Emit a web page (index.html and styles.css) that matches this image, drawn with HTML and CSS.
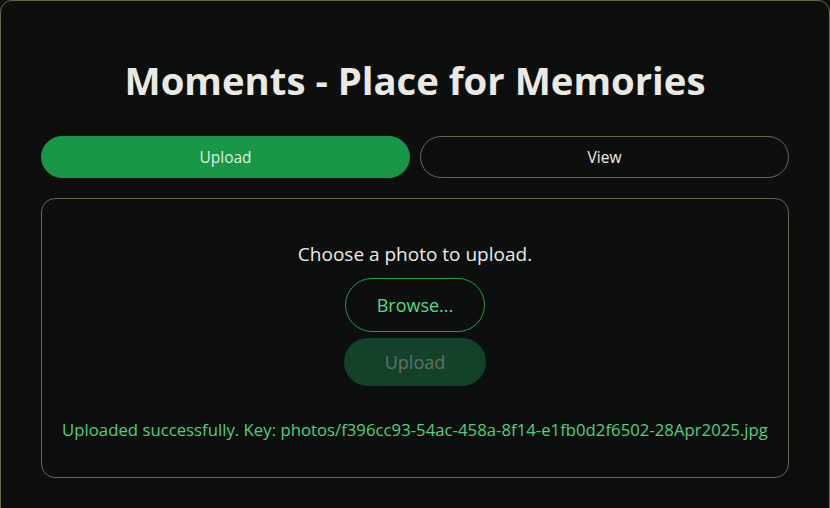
FILE: index.html
```html
<!DOCTYPE html>
<html lang="en">
<head>
<meta charset="utf-8">
<title>Moments</title>
<link rel="stylesheet" href="styles.css">
</head>
<body>
<main class="card">
  <h1 class="title">Moments - Place for Memories</h1>
  <nav class="tabs">
    <button class="tab tab-active">Upload</button>
    <button class="tab">View</button>
  </nav>
  <section class="panel">
    <p class="prompt">Choose a photo to upload.</p>
    <button class="btn btn-browse">Browse...</button>
    <button class="btn btn-upload" disabled>Upload</button>
    <p class="status">Uploaded successfully. Key: photos/f396cc93-54ac-458a-8f14-e1fb0d2f6502-28Apr2025.jpg</p>
  </section>
</main>
</body>
</html>
```
FILE: styles.css
```css
html, body {
  margin: 0;
  padding: 0;
  background: #0d0f0e;
}
body {
  font-family: "Open Sans", "Noto Sans", sans-serif;
  color: #e8e6e1;
}
.card {
  box-sizing: border-box;
  width: 830px;
  min-height: 530px;
  border: 1px solid #6e6553;
  border-radius: 12px;
  padding: 53px 40px 40px;
  background: #0d0f0e;
}
.title {
  margin: 0 0 30px;
  text-align: center;
  font-size: 38.3px;
  font-weight: 700;
  line-height: 52px;
  color: #ebe9e4;
}
.tabs {
  display: flex;
  gap: 10px;
}
.tab {
  flex: 1;
  height: 42px;
  border-radius: 21px;
  border: 1px solid #6e6553;
  background: transparent;
  color: #f0eee9;
  font-family: inherit;
  font-size: 15.5px;
}
.tab-active {
  background: #189747;
  border-color: #189747;
  color: #dff0e2;
}
.panel {
  margin-top: 20px;
  height: 280px;
  box-sizing: border-box;
  border: 1px solid #6e6553;
  border-radius: 14px;
  display: flex;
  flex-direction: column;
  align-items: center;
  padding-top: 42px;
}
.prompt {
  margin: 0;
  font-size: 19px;
  line-height: 26px;
  color: #ecebe6;
}
.btn {
  font-family: inherit;
  font-size: 18px;
  border-radius: 27px;
  cursor: pointer;
}
.btn-browse {
  margin-top: 11px;
  width: 140px;
  height: 54px;
  border: 1px solid #1f9d48;
  background: transparent;
  color: #55dc88;
}
.btn-upload {
  margin-top: 6px;
  width: 142px;
  height: 48px;
  border: none;
  background: #12432a;
  color: #6a6d6a;
}
.status {
  margin: 32px 0 0;
  font-size: 16.75px;
  line-height: 24px;
  color: #50d07f;
}
```
